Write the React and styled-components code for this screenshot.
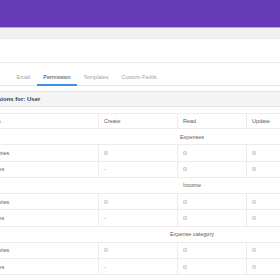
import React from 'react';
import styled, { createGlobalStyle } from 'styled-components';

const GlobalStyle = createGlobalStyle`
  html, body {
    margin: 0;
    padding: 0;
    background: #f1f1f1;
    overflow: hidden;
  }
  body {
    font-family: "Liberation Sans", Arial, sans-serif;
  }
`;

const TopBar = styled.header`
  height: 27px;
  background: #673ab7;
  border-bottom: 1px solid #b6a2dc;
`;

const Strip = styled.div`
  height: 10px;
  background: #f1f1f1;
`;

const Card = styled.section`
  background: #fff;
  border-top: 1px solid #e8e8e8;
  overflow: hidden;
  height: 242px;
`;

const CardHead = styled.div`
  height: 23px;
  border-bottom: 1px solid #ececec;
`;

const Page = styled.div`
  margin-left: -26px;
  width: 410px;
`;

const TabBar = styled.nav`
  display: flex;
  padding-left: 36px;
  border-bottom: 1px solid #e6e6e6;
`;

const Tab = styled.div`
  padding: 11px 6.5px 3px;
  line-height: 7px;
  font-size: 5.5px;
  color: ${p => (p.$active ? '#3c3c3c' : '#a2a2a2')};
  border-bottom: 2px solid ${p => (p.$active ? '#3b8fe2' : 'transparent')};
  margin-bottom: -1px;
  white-space: nowrap;
`;

const SectionHead = styled.div`
  margin-top: 5px;
  height: 16px;
  box-sizing: border-box;
  background: #f4f4f4;
  border-top: 1px solid #e4e4e4;
  border-bottom: 1px solid #e4e4e4;
  padding-left: 4px;
  line-height: 14px;
  font-size: 6px;
  font-weight: bold;
  color: #3a3a3a;
  white-space: nowrap;
`;

const Grid = styled.div`
  margin-top: 6px;
  border-top: 1px solid #ececec;
  font-size: 5.5px;
  color: #5a5a5a;
`;

const Row = styled.div`
  display: grid;
  grid-template-columns: 124px 79px 69px 69px 69px;
  height: ${p => (p.$head ? '15px' : '16.25px')};
  box-sizing: border-box;
  border-bottom: 1px solid #ececec;
`;

const Cell = styled.div`
  display: flex;
  align-items: center;
  padding-left: ${p => (p.$first ? '6px' : '5px')};
  border-left: ${p => (p.$first ? 'none' : '1px solid #ececec')};
  white-space: nowrap;
  overflow: hidden;
`;

const GroupRow = styled.div`
  height: 16.25px;
  box-sizing: border-box;
  border-bottom: 1px solid #ececec;
  padding-left: 26px;
  display: flex;
  align-items: center;
  justify-content: center;
  white-space: nowrap;
`;

const Check = styled.input.attrs({ type: 'checkbox' })`
  appearance: none;
  margin: 0;
  width: 4px;
  height: 4px;
  box-sizing: border-box;
  border: 1px solid #d2d2d2;
  border-radius: 1px;
  background: #e9e9e9;
`;

const Dash = styled.span`
  color: #8a8a8a;
`;

const tabs = ['Email', 'Permission', 'Templates', 'Custom Fields'];
const columns = ['Modules', 'Create', 'Read', 'Update', 'Delete'];
const groups = ['Expenses', 'Income', 'Expense category', 'Income category'];
const rows = [
  { label: 'Own entries', create: true },
  { label: 'All entries', create: false },
];

export default function App() {
  return (
    <>
      <GlobalStyle />
      <TopBar />
      <Strip />
      <Card>
        <CardHead />
        <Page>
          <TabBar>
            {tabs.map(t => (
              <Tab key={t} $active={t === 'Permission'}>{t}</Tab>
            ))}
          </TabBar>
          <SectionHead>Permissions for: User</SectionHead>
          <Grid>
            <Row $head>
              {columns.map((c, i) => (
                <Cell key={c} $first={i === 0}>{c}</Cell>
              ))}
            </Row>
            {groups.map(g => (
              <React.Fragment key={g}>
                <GroupRow>{g}</GroupRow>
                {rows.map(r => (
                  <Row key={r.label}>
                    <Cell $first>{r.label}</Cell>
                    <Cell>{r.create ? <Check readOnly /> : <Dash>-</Dash>}</Cell>
                    <Cell><Check readOnly /></Cell>
                    <Cell><Check readOnly /></Cell>
                    <Cell><Check readOnly /></Cell>
                  </Row>
                ))}
              </React.Fragment>
            ))}
          </Grid>
        </Page>
      </Card>
    </>
  );
}
